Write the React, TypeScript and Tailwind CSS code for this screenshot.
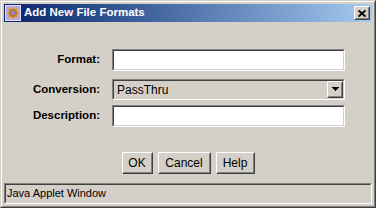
import React from "react";

const font = { fontFamily: '"Liberation Sans", Arial, sans-serif' };

function Sunken({ className = "", children }: { className?: string; children?: React.ReactNode }) {
  return (
    <div className={`border border-t-[#808080] border-l-[#808080] border-r-white border-b-white ${className}`}>
      <div className="h-full w-full border border-t-[#404040] border-l-[#404040] border-r-[#d4d0c8] border-b-[#d4d0c8]">
        {children}
      </div>
    </div>
  );
}

function Raised({ className = "", children }: { className?: string; children?: React.ReactNode }) {
  return (
    <div className={`border border-t-white border-l-white border-r-[#404040] border-b-[#404040] bg-[#d4d0c8] ${className}`}>
      <div className="h-full w-full border border-t-[#d4d0c8] border-l-[#d4d0c8] border-r-[#808080] border-b-[#808080] flex items-center justify-center">
        {children}
      </div>
    </div>
  );
}

function AppIcon() {
  return (
    <svg width="16" height="16" viewBox="0 0 16 16">
      <rect x="0" y="0" width="16" height="16" fill="#b8a8e8" />
      <rect x="0.5" y="0.5" width="15" height="15" fill="none" stroke="#e4dcff" />
      <polygon
        points="8,0.8 9.5,4.2 13.1,2.9 11.8,6.5 15.2,8 11.8,9.5 13.1,13.1 9.5,11.8 8,15.2 6.5,11.8 2.9,13.1 4.2,9.5 0.8,8 4.2,6.5 2.9,2.9 6.5,4.2"
        fill="#e0a030"
      />
      <circle cx="8" cy="8" r="4.2" fill="#c07818" />
      <circle cx="8" cy="8" r="2.3" fill="#9a80d0" />
    </svg>
  );
}

function Row({ label, h, className = "", children }: { label: string; h: string; className?: string; children: React.ReactNode }) {
  return (
    <div className={`flex items-center ${h} ${className}`}>
      <div className="w-[96px] text-right font-bold text-[11.5px] text-black leading-none" style={font}>
        {label}
      </div>
      <div className="ml-[12px] w-[233px] h-full">{children}</div>
    </div>
  );
}

export default function App() {
  return (
    <div className="w-[376px] h-[208px] bg-[#d4d0c8] border border-t-[#d4d0c8] border-l-[#d4d0c8] border-r-[#404040] border-b-[#404040]">
      <div className="h-full w-full border border-t-white border-l-white border-r-[#808080] border-b-[#808080] p-[2px] flex flex-col">
        {/* Title bar */}
        <div className="h-[18px] flex items-center bg-gradient-to-r from-[#0a246a] to-[#a6caf0] pl-[1px] pr-[2px]">
          <AppIcon />
          <span className="ml-[3px] text-white font-bold text-[11.5px] leading-none" style={font}>
            Add New File Formats
          </span>
          <div className="flex-1" />
          <Raised className="w-[16px] h-[14px]">
            <svg width="8" height="7" viewBox="0 0 8 7">
              <path d="M0.5,0.5 L7.5,6.5 M7.5,0.5 L0.5,6.5" stroke="#000" strokeWidth="1.9" fill="none" />
            </svg>
          </Raised>
        </div>

        {/* Body */}
        <div className="flex-1 flex flex-col pt-[27px]">
          <Row label="Format:" h="h-[22px]">
            <Sunken className="h-full w-full">
              <div className="h-full w-full bg-white" />
            </Sunken>
          </Row>
          <Row label="Conversion:" h="h-[21px]" className="mt-[8px]">
            <Sunken className="h-full w-full">
              <div className="h-full w-full bg-[#d4d0c8] flex items-center">
                <span className="pl-[3px] text-[12px] text-black leading-none" style={font}>
                  PassThru
                </span>
                <div className="flex-1" />
                <Raised className="w-[16px] h-full">
                  <svg width="7" height="5" viewBox="0 0 7 5">
                    <path d="M0,0 H7 V1 H6 V2 H5 V3 H4 V4 H3 V3 H2 V2 H1 V1 H0 Z" fill="#000" />
                  </svg>
                </Raised>
              </div>
            </Sunken>
          </Row>
          <Row label="Description:" h="h-[22px]" className="mt-[5px]">
            <Sunken className="h-full w-full">
              <div className="h-full w-full bg-white" />
            </Sunken>
          </Row>

          <div className="mt-[25px] flex justify-center gap-[5px]">
            {[
              ["OK", "w-[31px]"],
              ["Cancel", "w-[53px]"],
              ["Help", "w-[39px]"],
            ].map(([t, w]) => (
              <Raised key={t} className={`${w} h-[22px]`}>
                <span className="text-[12px] text-black leading-none" style={font}>
                  {t}
                </span>
              </Raised>
            ))}
          </div>
        </div>

        {/* Status bar */}
        <Sunken className="h-[21px] w-full">
          <div className="h-full flex items-center pl-[1px]">
            <span className="text-[11px] text-black leading-none" style={font}>
              Java Applet Window
            </span>
          </div>
        </Sunken>
      </div>
    </div>
  );
}
